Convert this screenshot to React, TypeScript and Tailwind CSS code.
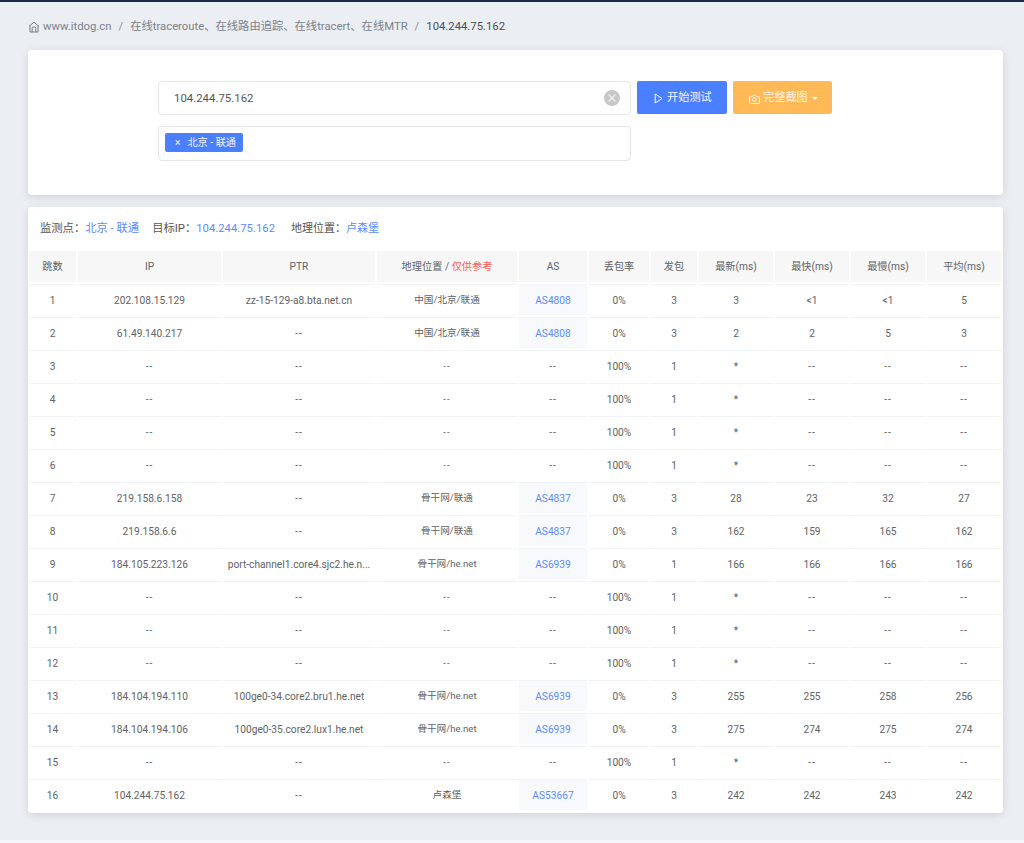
import React from "react";
import { X } from "lucide-react";

const font = "font-['Roboto','Noto_Sans_CJK_SC',sans-serif]";

const headers = ["跳数", "IP", "PTR", "地理位置", "AS", "丢包率", "发包", "最新(ms)", "最快(ms)", "最慢(ms)", "平均(ms)"];
const widths = ["w-[47px]", "w-[143px]", "w-[152px]", "w-[140px]", "w-[68px]", "w-[60px]", "w-[46px]", "w-[74px]", "w-[74px]", "w-[74px]", "w-[74px]"];

type Hop = string[];

const lost = (n: number): Hop => [String(n), "--", "--", "--", "--", "100%", "1", "*", "--", "--", "--"];

const hops: Hop[] = [
  ["1", "202.108.15.129", "zz-15-129-a8.bta.net.cn", "中国/北京/联通", "AS4808", "0%", "3", "3", "<1", "<1", "5"],
  ["2", "61.49.140.217", "--", "中国/北京/联通", "AS4808", "0%", "3", "2", "2", "5", "3"],
  lost(3),
  lost(4),
  lost(5),
  lost(6),
  ["7", "219.158.6.158", "--", "骨干网/联通", "AS4837", "0%", "3", "28", "23", "32", "27"],
  ["8", "219.158.6.6", "--", "骨干网/联通", "AS4837", "0%", "3", "162", "159", "165", "162"],
  ["9", "184.105.223.126", "port-channel1.core4.sjc2.he.n...", "骨干网/he.net", "AS6939", "0%", "1", "166", "166", "166", "166"],
  lost(10),
  lost(11),
  lost(12),
  ["13", "184.104.194.110", "100ge0-34.core2.bru1.he.net", "骨干网/he.net", "AS6939", "0%", "3", "255", "255", "258", "256"],
  ["14", "184.104.194.106", "100ge0-35.core2.lux1.he.net", "骨干网/he.net", "AS6939", "0%", "3", "275", "274", "275", "274"],
  lost(15),
  ["16", "104.244.75.162", "--", "卢森堡", "AS53667", "0%", "3", "242", "242", "243", "242"],
];

const App: React.FC = () => {
  return (
    <div className={`${font} min-h-[843px] bg-[#ebeef3] border-t-2 border-[#1c2a44] text-[#606266]`}>
      <div className="h-[838px] pl-[28px] pr-[21px] pt-[15px]">
        {/* breadcrumb */}
        <div className="flex items-center h-[20px] text-[11.3px]">
          <svg width="12" height="12" viewBox="0 0 12 12" fill="none" stroke="#7a7f87" strokeWidth="1" className="mr-[3px]">
            <path d="M1 5.4 6 1.2l5 4.2M2 4.8v6.2h8V4.8" />
            <path d="M4.2 11V7.6a1.8 1.8 0 0 1 3.6 0V11" />
          </svg>
          <span className="text-[#7d8189]">www.itdog.cn</span>
          <span className="mx-[7px] text-[#8a8e96]">/</span>
          <span className="text-[#7d8189]">在线traceroute、在线路由追踪、在线tracert、在线MTR</span>
          <span className="mx-[7px] text-[#8a8e96]">/</span>
          <span className="text-[#4a4d52]">104.244.75.162</span>
        </div>

        {/* search card */}
        <div className="mt-[13px] h-[145px] bg-white rounded-[4px] shadow-[0_2px_8px_rgba(0,0,0,0.12)] pt-[31px] pl-[130px]">
          <div className="flex gap-[6px]">
            <div className="w-[473px] h-[34px] border border-[#e6e6e6] rounded-[4px] flex items-center justify-between pl-[15px] pr-[10px] text-[11.4px]">
              <span className="text-[#555] pt-[1px]">104.244.75.162</span>
              <span className="w-[16px] h-[16px] rounded-full bg-[#c8c8c8] flex items-center justify-center">
                <X size={12} strokeWidth={2.5} className="text-[#f0f0f0]" />
              </span>
            </div>
            <button className="w-[90px] h-[33px] bg-[#4a80ff] rounded-[2px] text-[#f2f6ff] text-[11.2px] flex items-center pl-[17px] pt-[2px] gap-[4px]">
              <svg width="9" height="11" viewBox="0 0 9 11" fill="none" stroke="white" strokeWidth="1">
                <path d="M1.2 1v9l6.8-4.5z" />
              </svg>
              开始测试
            </button>
            <button className="w-[99px] h-[33px] bg-[#ffb957] rounded-[2px] text-[#fff3e0] text-[11.2px] flex items-center pl-[16px] pt-[2px] gap-[3px]">
              <svg width="11" height="10" viewBox="0 0 12 11" fill="none" stroke="white" strokeWidth="1">
                <path d="M1.5 3h2.2l.8-1.5h3L8.3 3h2.2a1 1 0 0 1 1 1v5.5a1 1 0 0 1-1 1h-9a1 1 0 0 1-1-1V4a1 1 0 0 1 1-1z" />
                <circle cx="6" cy="6.2" r="2.1" />
              </svg>
              完整截图
              <span className="w-0 h-0 border-x-[3px] border-x-transparent border-t-[3px] border-t-white ml-[1px]" />
            </button>
          </div>
          <div className="mt-[11px] w-[473px] h-[35px] border border-[#e6e6e6] rounded-[4px] flex items-start pt-[6px] pl-[6px]">
            <span className="h-[19px] w-[78px] bg-[#4a80ff] rounded-[2px] text-[#f2f6ff] text-[10.2px] flex items-center pl-[10px]">
              <span className="mr-[7px]">×</span>
              北京 - 联通
            </span>
          </div>
        </div>

        {/* result card */}
        <div className="mt-[12px] h-[606px] bg-white rounded-[4px] shadow-[0_2px_8px_rgba(0,0,0,0.12)] pt-[14px]">
          <div className="flex items-center h-[16px] pl-[12px] text-[11.3px] text-[#555]">
            <span>监测点：</span>
            <span className="text-[#5b8cff]">北京 - 联通</span>
            <span className="ml-[13px]">目标IP：</span>
            <span className="text-[#5b8cff]">104.244.75.162</span>
            <span className="ml-[16px] text-[11px]">地理位置：</span>
            <span className="text-[#5b8cff] text-[11px]">卢森堡</span>
          </div>
          <table className="mt-[12px] ml-[-1px] w-[976px] table-fixed border-separate border-spacing-[2px] text-[10.2px] text-center">
            <thead>
              <tr>
                {headers.map((h, i) => (
                  <th key={h} className={`${widths[i]} h-[31px] bg-[#f7f7f7] font-normal text-[#606266] p-0 pt-[1px]`}>
                    {i === 3 ? (
                      <>
                        {h} / <span className="text-[#ff5b5b]">仅供参考</span>
                      </>
                    ) : (
                      h
                    )}
                  </th>
                ))}
              </tr>
            </thead>
            <tbody>
              {hops.map((row) => (
                <tr key={row[0]}>
                  {row.map((c, i) => {
                    const isAs = i === 4 && c !== "--";
                    return (
                      <td
                        key={i}
                        className={`h-[31px] p-0 pt-[1px] border-t border-[#f0f2f5] ${isAs ? "bg-[#f7f9fc] text-[#5b8cff]" : "text-[#606266]"} ${i === 3 ? "text-[9.6px]" : ""} ${c === "--" ? "tracking-[1px]" : ""}`}
                      >
                        {c}
                      </td>
                    );
                  })}
                </tr>
              ))}
            </tbody>
          </table>
        </div>
      </div>
      <div className="h-[3px] bg-[#f4f6f8]" />
    </div>
  );
};

export default App;
